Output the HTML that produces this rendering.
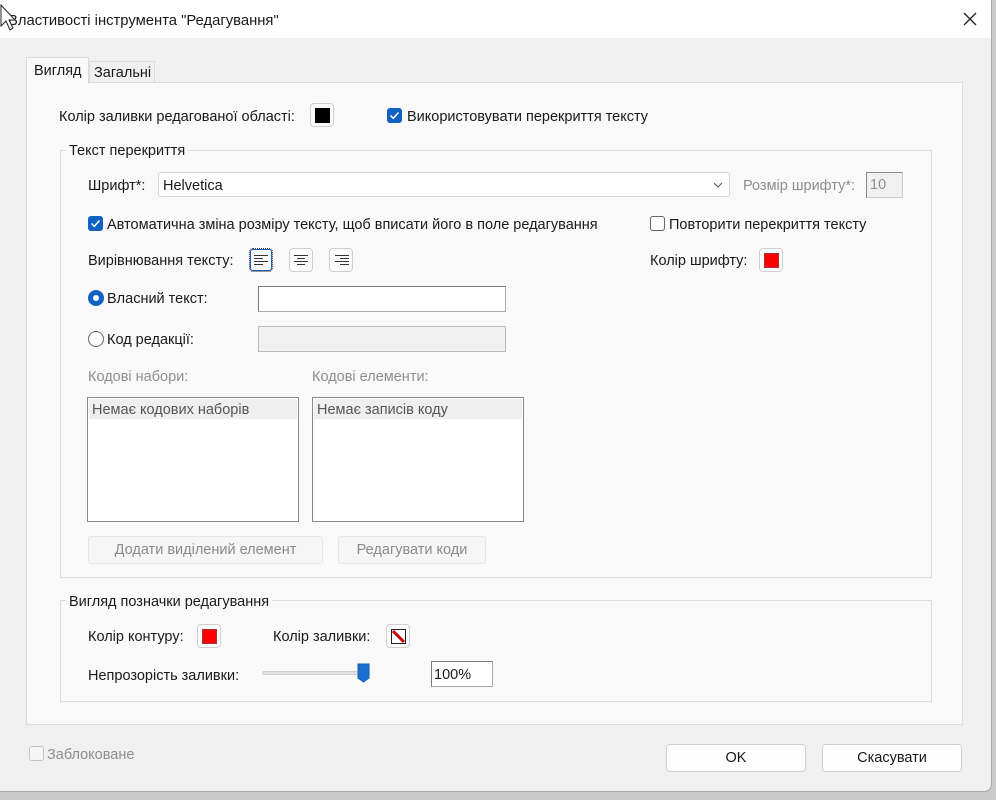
<!DOCTYPE html>
<html><head><meta charset="utf-8"><style>
*{box-sizing:border-box;margin:0;padding:0}
body{width:996px;height:800px;background:#c9c9c9;font-family:"Liberation Sans",Arial,sans-serif;font-size:14.5px;color:#1a1a1a;position:relative;overflow:hidden}
.a{position:absolute}
.win{left:0;top:0;width:992px;height:792px;background:#f0f0f0;border-radius:0 0 8px 0;border-right:1px solid #a8a8a8;border-bottom:1px solid #a8a8a8;overflow:hidden}
.title{left:0;top:0;width:992px;height:38px;background:#fff}
.t{position:absolute;white-space:nowrap;line-height:16px;margin-top:1px}
.g{color:#8e8e8e}
.sw{position:absolute;width:24px;height:24px;border:1px solid #cfcfcf;border-radius:4px;background:#fbfbfb}
.sw i{position:absolute;left:4px;top:4px;width:15px;height:15px}
.cb{position:absolute;width:15px;height:15px;border-radius:3px;background:#0f62c2}
.cb svg{position:absolute;left:1px;top:1px}
.cbo{position:absolute;width:15px;height:15px;border-radius:3px;border:1px solid #666;background:#fff}
.inp{position:absolute;background:#fff;border:1px solid #aaa;border-top-color:#7a7a7a;border-left-color:#7a7a7a}
.grp{position:absolute;border:1px solid #dcdcdc}
.gt{position:absolute;background:#f9f9f9;padding:0 3px;white-space:nowrap;line-height:16px;margin-top:1px}
.btn{position:absolute;background:#fdfdfd;border:1px solid #d0d0d0;border-radius:4px;text-align:center;line-height:27px}
.btnd{position:absolute;background:#f6f6f6;border:1px solid #e6e6e6;border-radius:3px;text-align:center;line-height:27px;color:#8a8a8a}
.al{position:absolute;width:24px;height:24px;border:1px solid #cfcfcf;border-radius:4px;background:#fbfbfb}
</style></head><body>
<div class="a win">
<div class="a title"></div>
<div class="t" style="left:8px;top:12px;font-size:14.8px">Властивості інструмента "Редагування"</div>
<svg class="a" style="left:963px;top:12px" width="14" height="14"><path d="M1 1L13 13M13 1L1 13" stroke="#222" stroke-width="1.3"/></svg>
<svg class="a" style="left:0;top:4px" width="16" height="30"><path d="M1 1L1 22L6 17L10 26L13 24L9 16L15 16Z" fill="#fff" stroke="#222" stroke-width="1"/></svg>

<div class="a" style="left:89px;top:61px;width:66px;height:22px;background:#f0f0f0;border:1px solid #dcdcdc;border-bottom:none"></div>
<div class="t" style="left:94px;top:64px">Загальні</div>
<div class="a" style="left:26px;top:82px;width:937px;height:643px;background:#f9f9f9;border:1px solid #dcdcdc"></div>
<div class="a" style="left:26px;top:57px;width:63px;height:27px;background:#f9f9f9;border:1px solid #dcdcdc;border-bottom:none"></div>
<div class="t" style="left:34px;top:62px">Вигляд</div>

<div class="t" style="left:59px;top:108px">Колір заливки редагованої області:</div>
<div class="sw" style="left:310px;top:103px"><i style="background:#000"></i></div>
<div class="cb" style="left:387px;top:108px"><svg width="13" height="13"><path d="M2.5 6.5L5.3 9.3L10.5 3.5" stroke="#fff" stroke-width="1.5" fill="none"/></svg></div>
<div class="t" style="left:407px;top:108px">Використовувати перекриття тексту</div>

<div class="grp" style="left:60px;top:150px;width:872px;height:428px"></div>
<div class="gt" style="left:66px;top:142px">Текст перекриття</div>
<div class="t" style="left:88px;top:177px">Шрифт*:</div>
<div class="a" style="left:158px;top:172px;width:572px;height:25px;background:#fff;border:1px solid #d6d6d6;border-radius:3px"></div>
<div class="t" style="left:163px;top:177px">Helvetica</div>
<svg class="a" style="left:713px;top:182px" width="10" height="6"><path d="M1 1L5 5L9 1" stroke="#555" fill="none"/></svg>
<div class="t g" style="left:743px;top:177px">Розмір шрифту*:</div>
<div class="a" style="left:866px;top:172px;width:37px;height:26px;background:#f0f0f0;border:1px solid #ccc;border-top-color:#888;border-left-color:#888"></div>
<div class="t g" style="left:870px;top:176px">10</div>

<div class="cb" style="left:88px;top:216px"><svg width="13" height="13"><path d="M2.5 6.5L5.3 9.3L10.5 3.5" stroke="#fff" stroke-width="1.5" fill="none"/></svg></div>
<div class="t" style="left:107px;top:216px">Автоматична зміна розміру тексту, щоб вписати його в поле редагування</div>
<div class="cbo" style="left:650px;top:216px"></div>
<div class="t" style="left:669px;top:216px">Повторити перекриття тексту</div>

<div class="t" style="left:88px;top:252px">Вирівнювання тексту:</div>
<div class="al" style="left:249px;top:248px;border:1px dotted #333;box-shadow:inset 0 0 0 1px #1a5fb4"><svg class="a" style="left:4px;top:6px" width="14" height="10"><path d="M0 .5H14M0 3.5H9M0 6.5H14M0 9.5H9" stroke="#333"/></svg></div>
<div class="al" style="left:289px;top:248px"><svg class="a" style="left:4px;top:6px" width="14" height="10"><path d="M0 .5H14M3 3.5H11M0 6.5H14M3 9.5H11" stroke="#333"/></svg></div>
<div class="al" style="left:329px;top:248px"><svg class="a" style="left:5px;top:6px" width="14" height="10"><path d="M0 .5H14M5 3.5H14M0 6.5H14M5 9.5H14" stroke="#333"/></svg></div>
<div class="t" style="left:650px;top:252px">Колір шрифту:</div>
<div class="sw" style="left:759px;top:248px"><i style="background:#f00;border:1px solid #a33"></i></div>

<div class="a" style="left:88px;top:290px;width:16px;height:16px;border-radius:50%;background:#0f62c2"><div class="a" style="left:5px;top:5px;width:6px;height:6px;border-radius:50%;background:#fff"></div></div>
<div class="t" style="left:107px;top:290px">Власний текст:</div>
<div class="inp" style="left:258px;top:286px;width:248px;height:26px"></div>
<div class="a" style="left:88px;top:331px;width:16px;height:16px;border-radius:50%;border:1px solid #666;background:#fff"></div>
<div class="t" style="left:107px;top:331px">Код редакції:</div>
<div class="inp" style="left:258px;top:326px;width:248px;height:26px;background:#f0f0f0;border-color:#bbb"></div>

<div class="t g" style="left:88px;top:368px">Кодові набори:</div>
<div class="t g" style="left:312px;top:368px">Кодові елементи:</div>
<div class="a" style="left:87px;top:397px;width:212px;height:125px;background:#fff;border:1px solid #888"><div class="a" style="left:1px;top:1px;width:208px;height:20px;background:#efefef"></div></div>
<div class="t" style="left:92px;top:401px;color:#555">Немає кодових наборів</div>
<div class="a" style="left:312px;top:397px;width:212px;height:125px;background:#fff;border:1px solid #888"><div class="a" style="left:1px;top:1px;width:208px;height:20px;background:#efefef"></div></div>
<div class="t" style="left:317px;top:401px;color:#555">Немає записів коду</div>
<div class="btnd" style="left:88px;top:536px;width:235px;height:28px">Додати виділений елемент</div>
<div class="btnd" style="left:338px;top:536px;width:148px;height:28px">Редагувати коди</div>

<div class="grp" style="left:60px;top:600px;width:872px;height:102px"></div>
<div class="gt" style="left:66px;top:593px">Вигляд позначки редагування</div>
<div class="t" style="left:88px;top:628px">Колір контуру:</div>
<div class="sw" style="left:197px;top:624px"><i style="background:#f00;border:1px solid #a33"></i></div>
<div class="t" style="left:273px;top:628px">Колір заливки:</div>
<div class="sw" style="left:386px;top:624px"><svg class="a" style="left:4px;top:4px" width="15" height="15"><rect x=".5" y=".5" width="14" height="14" fill="#fff" stroke="#222"/><path d="M2 2L13 13" stroke="#c00" stroke-width="3"/></svg></div>
<div class="t" style="left:88px;top:667px">Непрозорість заливки:</div>
<div class="a" style="left:262px;top:671px;width:108px;height:4px;background:#e2e2e2;border:1px solid #d0d0d0;border-radius:2px"></div>
<svg class="a" style="left:357px;top:663px" width="13" height="20"><path d="M1 1H12V15L6.5 19L1 15Z" fill="#1b6fcf" stroke="#1560b8"/></svg>
<div class="inp" style="left:431px;top:661px;width:62px;height:26px"></div>
<div class="t" style="left:434px;top:666px">100%</div>

<div class="a" style="left:29px;top:746px;width:15px;height:15px;border:1px solid #c4c4c4;border-radius:3px;background:#f5f5f5"></div>
<div class="t g" style="left:47px;top:746px">Заблоковане</div>
<div class="btn" style="left:666px;top:744px;width:140px;height:28px">OK</div>
<div class="btn" style="left:822px;top:744px;width:140px;height:28px">Скасувати</div>
</div>
</body></html>
